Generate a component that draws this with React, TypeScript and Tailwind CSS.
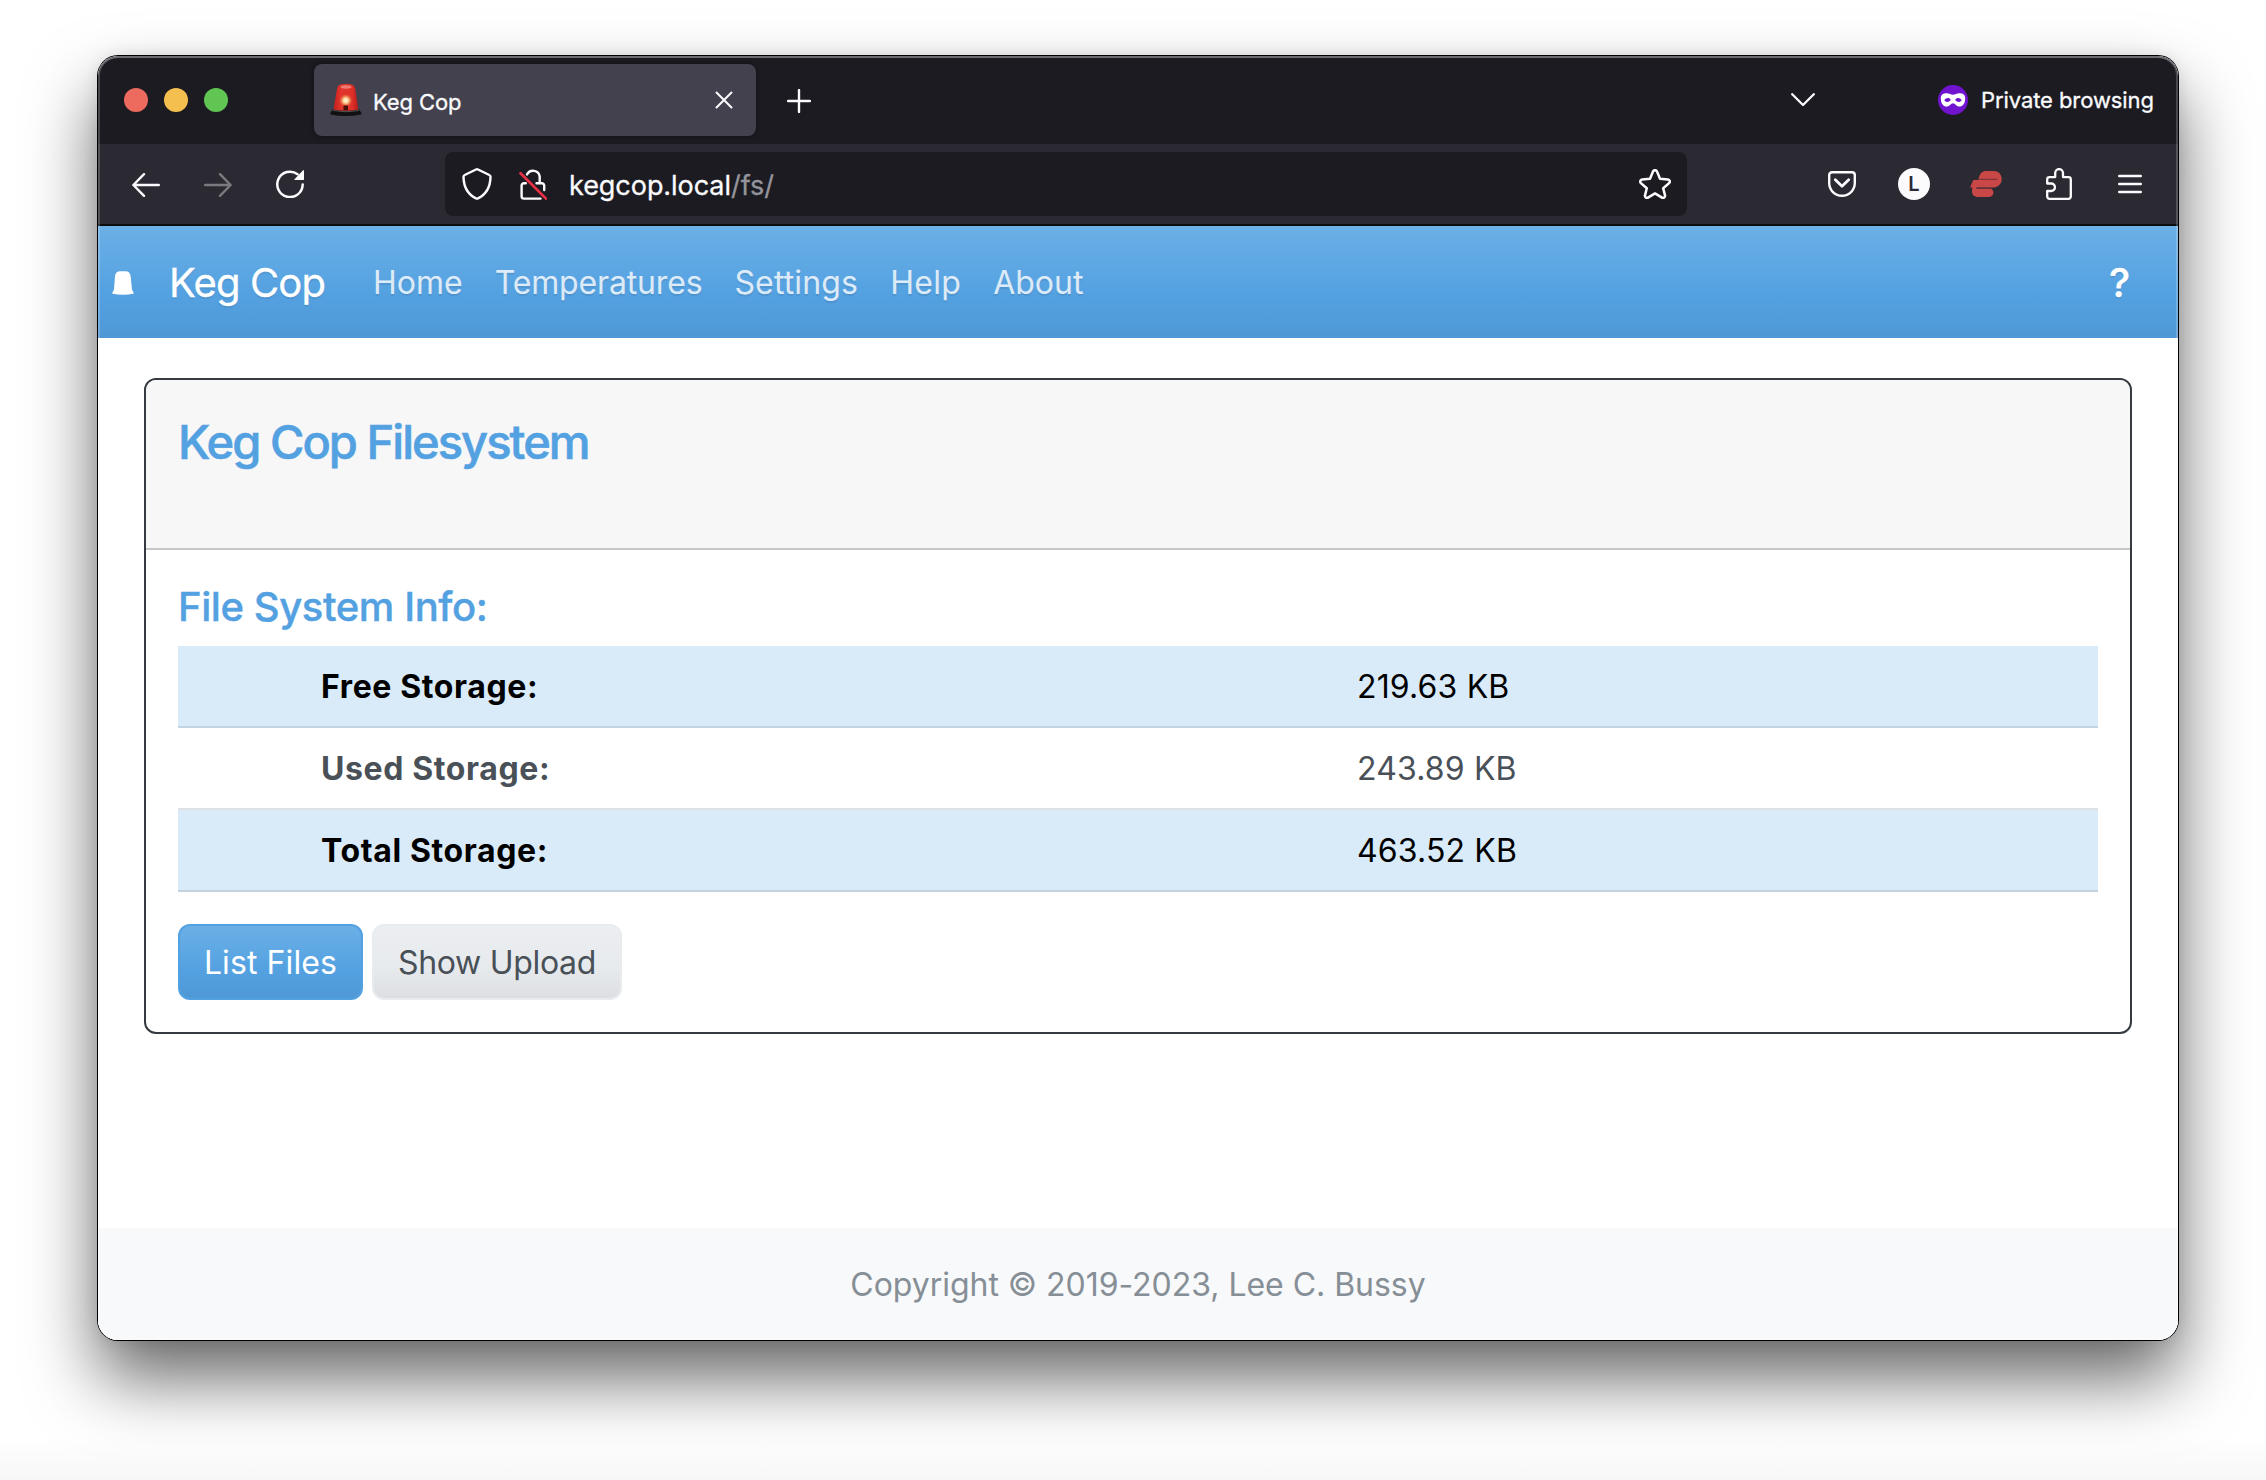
import type { ReactNode } from "react";

function BackIcon({ className }: { className: string }) {
  return (
    <svg className={className} viewBox="0 0 28 24" fill="none" stroke="currentColor" strokeWidth="2.4" strokeLinecap="round" strokeLinejoin="round">
      <path d="M26.8 12H1.4M12 1.2L1.4 12L12 22.8" />
    </svg>
  );
}

function ReloadIcon() {
  return (
    <svg className="ml-11 h-7 w-7 text-[#fbfbfe]" viewBox="0 0 28 28" fill="none">
      <path d="M26.7 14.6A12.7 12.7 0 1 1 21.6 4.2" stroke="currentColor" strokeWidth="2.5" strokeLinecap="round" />
      <path d="M28 .6V9.2a.9.9 0 0 1-.9.9H18.9a.5.5 0 0 1-.4-.9L27.1.3a.5.5 0 0 1 .9.3Z" fill="currentColor" />
    </svg>
  );
}

function ShieldIcon() {
  return (
    <svg className="h-8 w-[30px]" viewBox="0 0 30 32" fill="none" stroke="#fbfbfe" strokeWidth="2.4" strokeLinejoin="round">
      <path d="M14 1.5a2.2 2.2 0 0 1 2 0L27.3 7a2 2 0 0 1 1.2 1.9C28.3 18 25 26 16 30.4a2.2 2.2 0 0 1-2 0C5 26 1.7 18 1.5 8.9A2 2 0 0 1 2.7 7Z" />
    </svg>
  );
}

function InsecureLockIcon() {
  return (
    <svg className="ml-[27px] h-8 w-7" viewBox="0 0 28 32" fill="none" strokeLinecap="round" strokeLinejoin="round">
      <g stroke="#fbfbfe" strokeWidth="2.4">
        <path d="M8 6.4A6.8 6.8 0 0 1 20.7 8.5V15" />
        <path d="M17.5 15.2H22.8a2.4 2.4 0 0 1 2.4 2.4V22" />
        <path d="M6.8 15.2H5a2.4 2.4 0 0 0-2.4 2.4V28.2A2.4 2.4 0 0 0 5 30.6H21.5" />
      </g>
      <path d="M1.5 5.2L27 30.6" stroke="#e92f45" strokeWidth="2.7" />
    </svg>
  );
}

function StarIcon() {
  return (
    <svg className="mr-4 ml-auto h-[30px] w-8" viewBox="0 0 32 30" fill="none" stroke="#fbfbfe" strokeWidth="2.5" strokeLinejoin="round">
      <path d="M14 2.5a2.2 2.2 0 0 1 4 0L21 9.8L29 10.6a2 2 0 0 1 1.1 3.5L24.2 19.2L26 26.4a2 2 0 0 1-3 2.2L16 24.4L9 28.6a2 2 0 0 1-3-2.2L7.8 19.2L1.9 14.1A2 2 0 0 1 3 10.6L11 9.8Z" />
    </svg>
  );
}

function PocketIcon() {
  return (
    <svg className="ml-[141px] h-[26px] w-7" viewBox="0 0 28 26" fill="none" stroke="#fbfbfe" strokeWidth="2.4" strokeLinecap="round" strokeLinejoin="round">
      <path d="M4 1.3H24a2.8 2.8 0 0 1 2.8 2.8V12A12.8 12.8 0 0 1 1.2 12V4.1A2.8 2.8 0 0 1 4 1.3Z" />
      <path d="M7.3 8.8L14 15.3L20.7 8.8" strokeWidth="2.8" />
    </svg>
  );
}

function VpnIcon() {
  return (
    <svg className="ml-10 h-[26px] w-8" viewBox="0 0 32 26" fill="#c94746">
      <path d="M15.5 0H23.500C28.500 0 31.700 3.300 31.700 8.200C31.700 13.200 27.500 16.600 23 16.600H0L3.300 9H8.300C9.500 3.500 11.500 0 15.500 0Z" />
      <path d="M2.600 16H6.500V17.800H19.500C22 17.800 23.400 19.500 23.400 21.600C23.400 24.200 21.600 26 19 26H8C4 26 2 23.500 2 20.500C2 18.800 2.200 17.200 2.600 16Z" />
      <path d="M8.300 8.300H27.500M6.500 17.200H22" stroke="#6f3438" strokeWidth="1" />
    </svg>
  );
}

function PuzzleIcon() {
  return (
    <svg className="ml-11 h-8 w-[26px]" viewBox="0 0 26 32" fill="none" stroke="#fbfbfe" strokeWidth="2.3" strokeLinejoin="round">
      <path d="M1.2 15.5V11.4a2.3 2.3 0 0 1 2.3-2.3H9.2V5a3.9 3.9 0 0 1 7.8 0V9.1H22.5a2.3 2.3 0 0 1 2.3 2.3V28.5a2.3 2.3 0 0 1-2.3 2.3H3.5a2.3 2.3 0 0 1-2.3-2.3V23H5.2a3.75 3.75 0 0 0 0-7.5Z" />
    </svg>
  );
}

function MaskIcon() {
  return (
    <svg className="ml-[123px] h-[30px] w-[30px]" viewBox="0 0 30 30">
      <circle cx="15" cy="15" r="15" fill="#7114d0" />
      <path
        fillRule="evenodd"
        fill="#fff"
        d="M2.8 13C2.8 9.5 5.6 8.2 8.6 8.2C11.5 8.2 12.8 9.8 15 9.8C17.2 9.8 18.5 8.2 21.4 8.2C24.4 8.2 27.2 9.5 27.2 13C27.2 18.5 24.8 21.6 21.3 21.6C18.5 21.6 17 18.3 15 18.3C13 18.3 11.5 21.6 8.7 21.6C5.2 21.6 2.8 18.5 2.8 13ZM6.3 15.2C8 17.7 11.3 17.5 12.8 14.8C11.5 12.4 8 12.3 6.3 15.2ZM17.2 14.8C18.7 17.5 22 17.7 23.7 15.2C22 12.3 18.5 12.4 17.2 14.8Z"
      />
    </svg>
  );
}

function SirenIcon() {
  return (
    <svg className="ml-4 h-8 w-8" viewBox="0 0 32 32">
      <defs>
        <linearGradient id="dome" x1="0" x2="1" y1="0" y2="0">
          <stop offset="0" stopColor="#c3201c" />
          <stop offset=".3" stopColor="#e2352c" />
          <stop offset=".75" stopColor="#df3129" />
          <stop offset="1" stopColor="#b81b19" />
        </linearGradient>
        <radialGradient id="glow">
          <stop offset="0" stopColor="#fffbe0" />
          <stop offset=".35" stopColor="#fcd9a0" />
          <stop offset=".7" stopColor="#ee7a4a" stopOpacity=".7" />
          <stop offset="1" stopColor="#e2352c" stopOpacity="0" />
        </radialGradient>
      </defs>
      <path d="M3 25.500H29L31.200 28.500V30.500Q16 33.500 .5 30.500V28.500Z" fill="#111" />
      <path d="M3 26.500Q16 29 29 26.500" stroke="#555" strokeWidth="1" fill="none" />
      <path d="M7 4.500Q7.500 .8 12 .2Q16-.3 20 .2Q24.500 .8 25.200 4.500L28.300 25.500Q16 28 3.500 25.500Z" fill="url(#dome)" />
      <ellipse cx="16" cy="3" rx="5.5" ry="1.7" fill="#f29a94" opacity=".7" />
      <circle cx="15.800" cy="16.500" r="7" fill="url(#glow)" />
      <path d="M13.500 21.500H18V26.300H13.500Z" fill="#4a0f0a" />
    </svg>
  );
}

function NavLink({ children }: { children: ReactNode }) {
  return <a className="px-4 pt-0.5 text-[32px] leading-[48px] text-white/80">{children}</a>;
}

function TabStrip() {
  return (
    <div className="flex h-[88px] shrink-0 items-center bg-[#1c1b22] pr-[23px] pl-[26px]">
      <div className="flex gap-4">
        <span className="h-6 w-6 rounded-full bg-[#ed6a5e]" />
        <span className="h-6 w-6 rounded-full bg-[#f5bf4f]" />
        <span className="h-6 w-6 rounded-full bg-[#61c554]" />
      </div>
      <div className="ml-[86px] flex h-[72px] w-[442px] items-center rounded-lg bg-[#42414d] shadow-[0_0_5px_rgba(0,0,0,0.5)]">
        <SirenIcon />
        <span className="ml-[11px] pt-1 text-[22px] leading-7 tracking-[-0.1px] text-[#fbfbfe] [-webkit-text-stroke:0.3px_#fbfbfe]">Keg Cop</span>
        <svg className="mr-[23px] ml-auto h-[18px] w-[18px]" viewBox="0 0 18 18" stroke="#fbfbfe" strokeWidth="2" strokeLinecap="round">
          <path d="M1.5 1.5L16.5 16.5M16.5 1.5L1.5 16.5" />
        </svg>
      </div>
      <svg className="mt-0.5 ml-[31px] h-6 w-6" viewBox="0 0 24 24" stroke="#fbfbfe" strokeWidth="2.4" strokeLinecap="round">
        <path d="M1 12H23M12 1V23" />
      </svg>
      <svg className="ml-auto h-[14px] w-6" viewBox="0 0 24 14" fill="none" stroke="#fbfbfe" strokeWidth="2.3" strokeLinecap="round" strokeLinejoin="round">
        <path d="M1.2 1.2L12 12L22.8 1.2" />
      </svg>
      <MaskIcon />
      <span className="ml-[13px] w-[174px] text-[22px] leading-7 tracking-[-0.08px] whitespace-nowrap text-[#fbfbfe] [-webkit-text-stroke:0.3px_#fbfbfe]">Private browsing</span>
    </div>
  );
}

function Toolbar() {
  return (
    <div className="flex h-[82px] shrink-0 items-center border-b-2 border-[#0c0c0d] bg-[#2b2a33] pl-[34px]">
      <BackIcon className="mt-0.5 h-6 w-7 text-[#fbfbfe]" />
      <BackIcon className="mt-0.5 ml-11 h-6 w-7 -scale-x-100 text-[#7b7a80]" />
      <ReloadIcon />
      <div className="ml-[141px] flex h-16 w-[1242px] items-center rounded-lg bg-[#1c1b22] pl-[17px]">
        <ShieldIcon />
        <InsecureLockIcon />
        <span className="ml-[22px] pt-1 text-[27px] leading-9 tracking-[-0.05px] text-[#fbfbfe] [-webkit-text-stroke:0.3px]">
          kegcop.local<span className="text-[#94949a]">/fs/</span>
        </span>
        <StarIcon />
      </div>
      <PocketIcon />
      <div className="ml-[42px] flex h-8 w-8 items-center justify-center rounded-full bg-[#fbfbfe] text-xl leading-8 font-semibold text-[#2b2a33]">L</div>
      <VpnIcon />
      <PuzzleIcon />
      <svg className="ml-[46px] h-5 w-6" viewBox="0 0 24 20" stroke="#fbfbfe" strokeWidth="2.4" strokeLinecap="round">
        <path d="M1.2 2H22.8M1.2 10H22.8M1.2 18H22.8" />
      </svg>
    </div>
  );
}

function Navbar() {
  return (
    <nav className="flex h-28 shrink-0 items-center bg-linear-[180deg,#6bb0e6,#54a1e1_60%,#4f98d6] pl-3.5 text-shadow-[0_2px_1px_rgba(0,0,0,0.08)]">
      <svg className="mt-0.5 h-6 w-[22px]" viewBox="0 0 22 24" fill="#fff">
        <path d="M3 5Q3.6 .2 8 .2H13.5Q18 .2 18.6 5L20 18.500L22 22.500Q11 25.200 0 22.500L2 18.500Z" />
      </svg>
      <span className="ml-[35px] w-[188px] pt-0.5 text-[40px] leading-[60px] tracking-[-0.85px] text-white [-webkit-text-stroke:0.3px]">Keg Cop</span>
      <NavLink>Home</NavLink>
      <NavLink>
        <span className="tracking-[-0.15px]">Temperatures</span>
      </NavLink>
      <NavLink>
        <span className="tracking-[0.15px]">Settings</span>
      </NavLink>
      <NavLink>
        <span className="tracking-[0.3px]">Help</span>
      </NavLink>
      <NavLink>About</NavLink>
      <span className="mr-[48px] ml-auto pt-0.5 text-[40px] leading-[60px] font-medium text-white [-webkit-text-stroke:0.3px]">?</span>
    </nav>
  );
}

const rows = [
  { label: "Free Storage:", value: "219.63 KB", style: "bg-[#d9ebf9] border-[#c3d4e0] text-black" },
  { label: "Used Storage:", value: "243.89 KB", style: "bg-white border-[#dee2e6] text-[#495057]" },
  { label: "Total Storage:", value: "463.52 KB", style: "bg-[#d9ebf9] border-[#c3d4e0] text-black" },
];

function FilesystemCard() {
  return (
    <section className="mx-[46px] mt-10 overflow-hidden rounded-xl border-2 border-[#343a40]">
      <header className="h-[170px] border-b-2 border-[#c8c8c9] bg-[#f7f7f7] px-8 pt-[33px]">
        <h1 className="text-[47px] leading-[57px] font-medium tracking-[-1.95px] text-[#54a1e1] [-webkit-text-stroke:0.6px]">Keg Cop Filesystem</h1>
      </header>
      <div className="p-8">
        <h2 className="mb-[15px] pt-px text-[40px] leading-[48px] font-medium tracking-[-0.42px] text-[#54a1e1] [-webkit-text-stroke:0.4px]">File System Info:</h2>
        <div className="text-[32px] leading-[48px]">
          {rows.map((row) => (
            <div key={row.label} className={`flex h-[82px] items-center border-b-2 pt-0.5 pl-[143px] ${row.style}`}>
              <span className="w-[1036px] font-bold tracking-[0.62px]">{row.label}</span>
              <span className="tracking-[0.15px]">{row.value}</span>
            </div>
          ))}
        </div>
        <div className="mt-8 flex gap-[9px] text-[32px] leading-[48px] text-shadow-[0_2px_1px_rgba(0,0,0,0.08)]">
          <button className="h-[76px] w-[185px] rounded-xl border-2 border-[#54a1e1] bg-linear-[180deg,#6bb0e6,#54a1e1_60%,#4f98d6] pt-0.5 tracking-[0.1px] text-white">List Files</button>
          <button className="h-[76px] w-[250px] rounded-xl border-2 border-[#e9ecef] bg-linear-[180deg,#eceef1,#e7eaed_60%,#dcdee1] pt-0.5 tracking-[-0.3px] text-[#495057]">Show Upload</button>
        </div>
      </div>
    </section>
  );
}

export default function App() {
  return (
    <div className="h-[1480px] w-[2266px] overflow-hidden bg-linear-[180deg,#ffffff_97%,#f7f7f7] pt-14 pl-[98px] font-['Inter',sans-serif]">
      <div className="relative flex h-[1284px] w-[2080px] flex-col rounded-[20px] shadow-[0_0_0_1px_#000,0_0_16px_rgba(0,0,0,0.1),0_38px_70px_rgba(0,0,0,0.6)]">
        <div className="flex grow flex-col overflow-hidden rounded-[20px] bg-white">
          <TabStrip />
          <Toolbar />
          <Navbar />
          <main className="grow">
            <FilesystemCard />
          </main>
          <footer className="flex h-28 shrink-0 items-center justify-center bg-[#f8f9fb] pt-0.5 text-[32px] leading-[48px] tracking-[-0.03px] text-[#868e96]">
            Copyright © 2019-2023, Lee C. Bussy
          </footer>
        </div>
        <div className="pointer-events-none absolute inset-0 rounded-[20px] shadow-[inset_0_0_0_2px_rgba(255,255,255,0.2),inset_0_2px_0_0_rgba(255,255,255,0.2)]" />
      </div>
    </div>
  );
}
